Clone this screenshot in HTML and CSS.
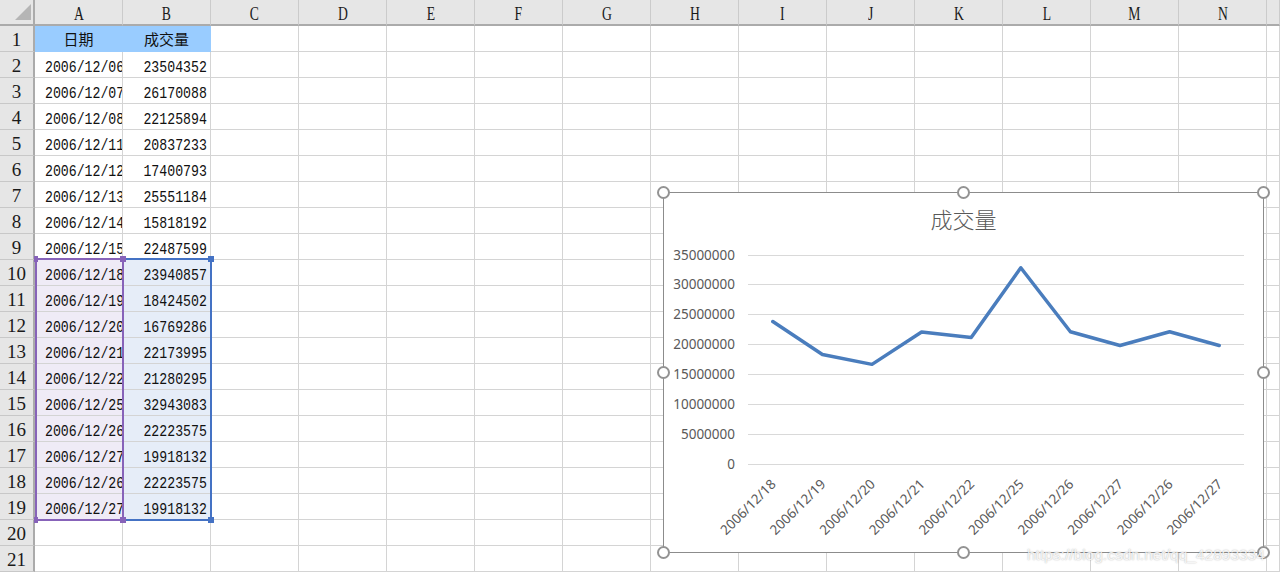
FILE: index.html
```html
<!DOCTYPE html>
<html lang="zh-CN">
<head>
<meta charset="utf-8">
<title>成交量</title>
<link rel="stylesheet" href="styles.css">
</head>
<body>
<div class="app">
  <div class="sheet">
    <div class="row">
      <div class="corner"><svg width="33" height="24" viewBox="0 0 33 24"><polygon points="15,20 31,20 31,4" fill="#b5b5b5"/></svg></div>
      <div class="ch"><span>A</span></div><div class="ch"><span>B</span></div><div class="ch"><span>C</span></div><div class="ch"><span>D</span></div><div class="ch"><span>E</span></div><div class="ch"><span>F</span></div><div class="ch"><span>G</span></div><div class="ch"><span>H</span></div><div class="ch"><span>I</span></div><div class="ch"><span>J</span></div><div class="ch"><span>K</span></div><div class="ch"><span>L</span></div><div class="ch"><span>M</span></div><div class="ch"><span>N</span></div><div class="ch"></div>
    </div>
    <div class="row"><div class="rh">1</div><div class="c hd">日期</div><div class="c hd">成交量</div><div class="c"></div><div class="c"></div><div class="c"></div><div class="c"></div><div class="c"></div><div class="c"></div><div class="c"></div><div class="c"></div><div class="c"></div><div class="c"></div><div class="c"></div><div class="c"></div><div class="c"></div></div>
    <div class="row"><div class="rh">2</div><div class="c date"><span class="t">2006/12/06</span></div><div class="c num"><span class="t">23504352</span></div><div class="c"></div><div class="c"></div><div class="c"></div><div class="c"></div><div class="c"></div><div class="c"></div><div class="c"></div><div class="c"></div><div class="c"></div><div class="c"></div><div class="c"></div><div class="c"></div><div class="c"></div></div>
    <div class="row"><div class="rh">3</div><div class="c date"><span class="t">2006/12/07</span></div><div class="c num"><span class="t">26170088</span></div><div class="c"></div><div class="c"></div><div class="c"></div><div class="c"></div><div class="c"></div><div class="c"></div><div class="c"></div><div class="c"></div><div class="c"></div><div class="c"></div><div class="c"></div><div class="c"></div><div class="c"></div></div>
    <div class="row"><div class="rh">4</div><div class="c date"><span class="t">2006/12/08</span></div><div class="c num"><span class="t">22125894</span></div><div class="c"></div><div class="c"></div><div class="c"></div><div class="c"></div><div class="c"></div><div class="c"></div><div class="c"></div><div class="c"></div><div class="c"></div><div class="c"></div><div class="c"></div><div class="c"></div><div class="c"></div></div>
    <div class="row"><div class="rh">5</div><div class="c date"><span class="t">2006/12/11</span></div><div class="c num"><span class="t">20837233</span></div><div class="c"></div><div class="c"></div><div class="c"></div><div class="c"></div><div class="c"></div><div class="c"></div><div class="c"></div><div class="c"></div><div class="c"></div><div class="c"></div><div class="c"></div><div class="c"></div><div class="c"></div></div>
    <div class="row"><div class="rh">6</div><div class="c date"><span class="t">2006/12/12</span></div><div class="c num"><span class="t">17400793</span></div><div class="c"></div><div class="c"></div><div class="c"></div><div class="c"></div><div class="c"></div><div class="c"></div><div class="c"></div><div class="c"></div><div class="c"></div><div class="c"></div><div class="c"></div><div class="c"></div><div class="c"></div></div>
    <div class="row"><div class="rh">7</div><div class="c date"><span class="t">2006/12/13</span></div><div class="c num"><span class="t">25551184</span></div><div class="c"></div><div class="c"></div><div class="c"></div><div class="c"></div><div class="c"></div><div class="c"></div><div class="c"></div><div class="c"></div><div class="c"></div><div class="c"></div><div class="c"></div><div class="c"></div><div class="c"></div></div>
    <div class="row"><div class="rh">8</div><div class="c date"><span class="t">2006/12/14</span></div><div class="c num"><span class="t">15818192</span></div><div class="c"></div><div class="c"></div><div class="c"></div><div class="c"></div><div class="c"></div><div class="c"></div><div class="c"></div><div class="c"></div><div class="c"></div><div class="c"></div><div class="c"></div><div class="c"></div><div class="c"></div></div>
    <div class="row"><div class="rh">9</div><div class="c date"><span class="t">2006/12/15</span></div><div class="c num"><span class="t">22487599</span></div><div class="c"></div><div class="c"></div><div class="c"></div><div class="c"></div><div class="c"></div><div class="c"></div><div class="c"></div><div class="c"></div><div class="c"></div><div class="c"></div><div class="c"></div><div class="c"></div><div class="c"></div></div>
    <div class="row"><div class="rh">10</div><div class="c date pa"><span class="t">2006/12/18</span></div><div class="c num pb"><span class="t">23940857</span></div><div class="c"></div><div class="c"></div><div class="c"></div><div class="c"></div><div class="c"></div><div class="c"></div><div class="c"></div><div class="c"></div><div class="c"></div><div class="c"></div><div class="c"></div><div class="c"></div><div class="c"></div></div>
    <div class="row"><div class="rh">11</div><div class="c date pa"><span class="t">2006/12/19</span></div><div class="c num pb"><span class="t">18424502</span></div><div class="c"></div><div class="c"></div><div class="c"></div><div class="c"></div><div class="c"></div><div class="c"></div><div class="c"></div><div class="c"></div><div class="c"></div><div class="c"></div><div class="c"></div><div class="c"></div><div class="c"></div></div>
    <div class="row"><div class="rh">12</div><div class="c date pa"><span class="t">2006/12/20</span></div><div class="c num pb"><span class="t">16769286</span></div><div class="c"></div><div class="c"></div><div class="c"></div><div class="c"></div><div class="c"></div><div class="c"></div><div class="c"></div><div class="c"></div><div class="c"></div><div class="c"></div><div class="c"></div><div class="c"></div><div class="c"></div></div>
    <div class="row"><div class="rh">13</div><div class="c date pa"><span class="t">2006/12/21</span></div><div class="c num pb"><span class="t">22173995</span></div><div class="c"></div><div class="c"></div><div class="c"></div><div class="c"></div><div class="c"></div><div class="c"></div><div class="c"></div><div class="c"></div><div class="c"></div><div class="c"></div><div class="c"></div><div class="c"></div><div class="c"></div></div>
    <div class="row"><div class="rh">14</div><div class="c date pa"><span class="t">2006/12/22</span></div><div class="c num pb"><span class="t">21280295</span></div><div class="c"></div><div class="c"></div><div class="c"></div><div class="c"></div><div class="c"></div><div class="c"></div><div class="c"></div><div class="c"></div><div class="c"></div><div class="c"></div><div class="c"></div><div class="c"></div><div class="c"></div></div>
    <div class="row"><div class="rh">15</div><div class="c date pa"><span class="t">2006/12/25</span></div><div class="c num pb"><span class="t">32943083</span></div><div class="c"></div><div class="c"></div><div class="c"></div><div class="c"></div><div class="c"></div><div class="c"></div><div class="c"></div><div class="c"></div><div class="c"></div><div class="c"></div><div class="c"></div><div class="c"></div><div class="c"></div></div>
    <div class="row"><div class="rh">16</div><div class="c date pa"><span class="t">2006/12/26</span></div><div class="c num pb"><span class="t">22223575</span></div><div class="c"></div><div class="c"></div><div class="c"></div><div class="c"></div><div class="c"></div><div class="c"></div><div class="c"></div><div class="c"></div><div class="c"></div><div class="c"></div><div class="c"></div><div class="c"></div><div class="c"></div></div>
    <div class="row"><div class="rh">17</div><div class="c date pa"><span class="t">2006/12/27</span></div><div class="c num pb"><span class="t">19918132</span></div><div class="c"></div><div class="c"></div><div class="c"></div><div class="c"></div><div class="c"></div><div class="c"></div><div class="c"></div><div class="c"></div><div class="c"></div><div class="c"></div><div class="c"></div><div class="c"></div><div class="c"></div></div>
    <div class="row"><div class="rh">18</div><div class="c date pa"><span class="t">2006/12/26</span></div><div class="c num pb"><span class="t">22223575</span></div><div class="c"></div><div class="c"></div><div class="c"></div><div class="c"></div><div class="c"></div><div class="c"></div><div class="c"></div><div class="c"></div><div class="c"></div><div class="c"></div><div class="c"></div><div class="c"></div><div class="c"></div></div>
    <div class="row"><div class="rh">19</div><div class="c date pa"><span class="t">2006/12/27</span></div><div class="c num pb"><span class="t">19918132</span></div><div class="c"></div><div class="c"></div><div class="c"></div><div class="c"></div><div class="c"></div><div class="c"></div><div class="c"></div><div class="c"></div><div class="c"></div><div class="c"></div><div class="c"></div><div class="c"></div><div class="c"></div></div>
    <div class="row"><div class="rh">20</div><div class="c"></div><div class="c"></div><div class="c"></div><div class="c"></div><div class="c"></div><div class="c"></div><div class="c"></div><div class="c"></div><div class="c"></div><div class="c"></div><div class="c"></div><div class="c"></div><div class="c"></div><div class="c"></div><div class="c"></div></div>
    <div class="row"><div class="rh">21</div><div class="c"></div><div class="c"></div><div class="c"></div><div class="c"></div><div class="c"></div><div class="c"></div><div class="c"></div><div class="c"></div><div class="c"></div><div class="c"></div><div class="c"></div><div class="c"></div><div class="c"></div><div class="c"></div><div class="c"></div></div>
  </div>

  <div class="range range-b"></div>
  <div class="range range-a"></div>
  <div class="knob knob-a k-tl"></div>
  <div class="knob knob-a k-tr"></div>
  <div class="knob knob-a k-bl"></div>
  <div class="knob knob-a k-br"></div>
  <div class="knob knob-b k-btr"></div>
  <div class="knob knob-b k-bbr"></div>

  <div class="chart">
    <svg class="plot" width="599" height="359" viewBox="0 0 599 359">
      <text class="title" x="299.5" y="35" text-anchor="middle">成交量</text>
      <g class="grid">
        <line x1="84" x2="580" y1="62.5" y2="62.5"/>
        <line x1="84" x2="580" y1="91.5" y2="91.5"/>
        <line x1="84" x2="580" y1="121.5" y2="121.5"/>
        <line x1="84" x2="580" y1="151.5" y2="151.5"/>
        <line x1="84" x2="580" y1="181.5" y2="181.5"/>
        <line x1="84" x2="580" y1="211.5" y2="211.5"/>
        <line x1="84" x2="580" y1="241.5" y2="241.5"/>
        <line x1="84" x2="580" y1="271.5" y2="271.5"/>
      </g>
      <g class="ax" text-anchor="end">
        <text x="71" y="66.8">35000000</text>
        <text x="71" y="95.8">30000000</text>
        <text x="71" y="125.8">25000000</text>
        <text x="71" y="155.8">20000000</text>
        <text x="71" y="185.8">15000000</text>
        <text x="71" y="215.8">10000000</text>
        <text x="71" y="245.8">5000000</text>
        <text x="71" y="275.8">0</text>
      </g>
      <polyline class="series" points="108.8,128.54 158.4,161.48 208,171.36 257.6,139.09 307.2,144.43 356.8,74.78 406.4,138.79 456,152.56 505.6,138.79 555.2,152.56"/>
      <g class="ax" text-anchor="end">
        <text x="112.8" y="292" transform="rotate(-45 112.8 292)">2006/12/18</text>
        <text x="162.4" y="292" transform="rotate(-45 162.4 292)">2006/12/19</text>
        <text x="212" y="292" transform="rotate(-45 212 292)">2006/12/20</text>
        <text x="261.6" y="292" transform="rotate(-45 261.6 292)">2006/12/21</text>
        <text x="311.2" y="292" transform="rotate(-45 311.2 292)">2006/12/22</text>
        <text x="360.8" y="292" transform="rotate(-45 360.8 292)">2006/12/25</text>
        <text x="410.4" y="292" transform="rotate(-45 410.4 292)">2006/12/26</text>
        <text x="460" y="292" transform="rotate(-45 460 292)">2006/12/27</text>
        <text x="509.6" y="292" transform="rotate(-45 509.6 292)">2006/12/26</text>
        <text x="559.2" y="292" transform="rotate(-45 559.2 292)">2006/12/27</text>
      </g>
    </svg>
    <div class="handle h-tl"></div>
    <div class="handle h-tc"></div>
    <div class="handle h-tr"></div>
    <div class="handle h-ml"></div>
    <div class="handle h-mr"></div>
    <div class="handle h-bl"></div>
    <div class="handle h-bc"></div>
    <div class="handle h-br"></div>
  </div>

  <div class="watermark">https://blog.csdn.net/qq_42893334</div>
</div>
</body>
</html>
```

FILE: styles.css
```css
html, body {
  margin: 0;
  padding: 0;
  background: #ffffff;
  overflow: hidden;
}

.app {
  position: relative;
  width: 1280px;
  height: 573px;
  overflow: hidden;
  background: #ffffff;
}

.sheet {
  display: grid;
  grid-template-columns: 35px repeat(14, 88px) 13px;
  grid-auto-rows: 26px;
}

.row {
  display: contents;
}

.corner,
.ch,
.rh,
.c {
  box-sizing: border-box;
}

.corner {
  background: #e6e6e6;
  border-right: 2px solid #ababab;
  border-bottom: 2px solid #ababab;
}

.corner svg {
  display: block;
}

.ch {
  background: #e6e6e6;
  border-right: 1px solid #cbcbcb;
  border-bottom: 2px solid #ababab;
  text-align: center;
  font-family: "Liberation Serif", serif;
  font-size: 19px;
  line-height: 21px;
  padding-top: 3px;
  color: #1a1a1a;
}

.ch span {
  display: inline-block;
  transform: scaleX(0.72);
}

.rh {
  background: #e6e6e6;
  border-right: 2px solid #ababab;
  border-bottom: 1px solid #c8c8c8;
  text-align: center;
  font-family: "Liberation Serif", serif;
  font-size: 19px;
  line-height: 21px;
  padding-top: 3px;
  color: #1a1a1a;
}

.c {
  border-right: 1px solid #d4d4d4;
  border-bottom: 1px solid #d4d4d4;
  overflow: hidden;
  white-space: nowrap;
  font-family: "Liberation Mono", monospace;
  font-size: 16px;
  line-height: 20px;
  padding-top: 6px;
  color: #111;
}

.date {
  padding-left: 10px;
}

.num {
  text-align: right;
  padding-right: 3px;
}

.t {
  display: inline-block;
  transform: scaleX(0.825);
  transform-origin: left center;
}

.num .t {
  transform-origin: right center;
}

.hd {
  background: #99ccff;
  border-color: transparent;
  font-family: "Noto Sans CJK SC", sans-serif;
  font-size: 15px;
  line-height: 25px;
  padding-top: 0;
  text-align: center;
}

.pa {
  background: #efebf6;
}

.pb {
  background: #e6edf8;
}

/* range highlights that sit over the cells */
.range {
  position: absolute;
  top: 258px;
  height: 263px;
  box-sizing: border-box;
  border: 2px solid;
}

.range-a {
  left: 35px;
  width: 89px;
  border-color: #8763b9;
}

.range-b {
  left: 122px;
  width: 90px;
  border-color: #4472c4;
}

.knob {
  position: absolute;
  width: 6px;
  height: 6px;
}

.knob-a {
  background: #8763b9;
}

.knob-b {
  background: #4472c4;
}

.k-tl { left: 34px; top: 256px; width: 4px; }
.k-tr { left: 120px; top: 256px; }
.k-bl { left: 34px; top: 517px; width: 4px; }
.k-br { left: 120px; top: 517px; }
.k-btr { left: 208px; top: 256px; }
.k-bbr { left: 208px; top: 517px; }

/* chart object floating over the sheet */
.chart {
  position: absolute;
  left: 663px;
  top: 192px;
  width: 601px;
  height: 361px;
  box-sizing: border-box;
  border: 1px solid #8c8c8c;
  background: #ffffff;
}

.plot {
  display: block;
}

.title {
  font-family: "Noto Sans CJK SC", sans-serif;
  font-size: 22px;
  font-weight: 300;
  fill: #595959;
}

.grid line {
  stroke: #d9d9d9;
  stroke-width: 1;
  shape-rendering: crispEdges;
}

.ax {
  font-family: "Noto Sans", sans-serif;
  font-size: 13.5px;
  fill: #595959;
}

.series {
  fill: none;
  stroke: #4a7dbd;
  stroke-width: 3.5;
  stroke-linejoin: round;
  stroke-linecap: round;
}

.handle {
  position: absolute;
  width: 13px;
  height: 13px;
  box-sizing: border-box;
  border: 2px solid #939393;
  border-radius: 50%;
  background: #ffffff;
}

.h-tl { left: -7px; top: -7px; }
.h-tc { left: 293px; top: -7px; }
.h-tr { right: -7px; top: -7px; }
.h-ml { left: -7px; top: 173px; }
.h-mr { right: -7px; top: 173px; }
.h-bl { left: -7px; bottom: -7px; }
.h-bc { left: 293px; bottom: -7px; }
.h-br { right: -7px; bottom: -7px; }

.watermark {
  position: absolute;
  left: 1027px;
  top: 545px;
  font-family: "Liberation Sans", sans-serif;
  font-size: 15.5px;
  line-height: 20px;
  color: rgba(255, 255, 255, 0.85);
  text-shadow: 0 0 1.5px rgba(0, 0, 0, 0.35);
  white-space: nowrap;
}
```
